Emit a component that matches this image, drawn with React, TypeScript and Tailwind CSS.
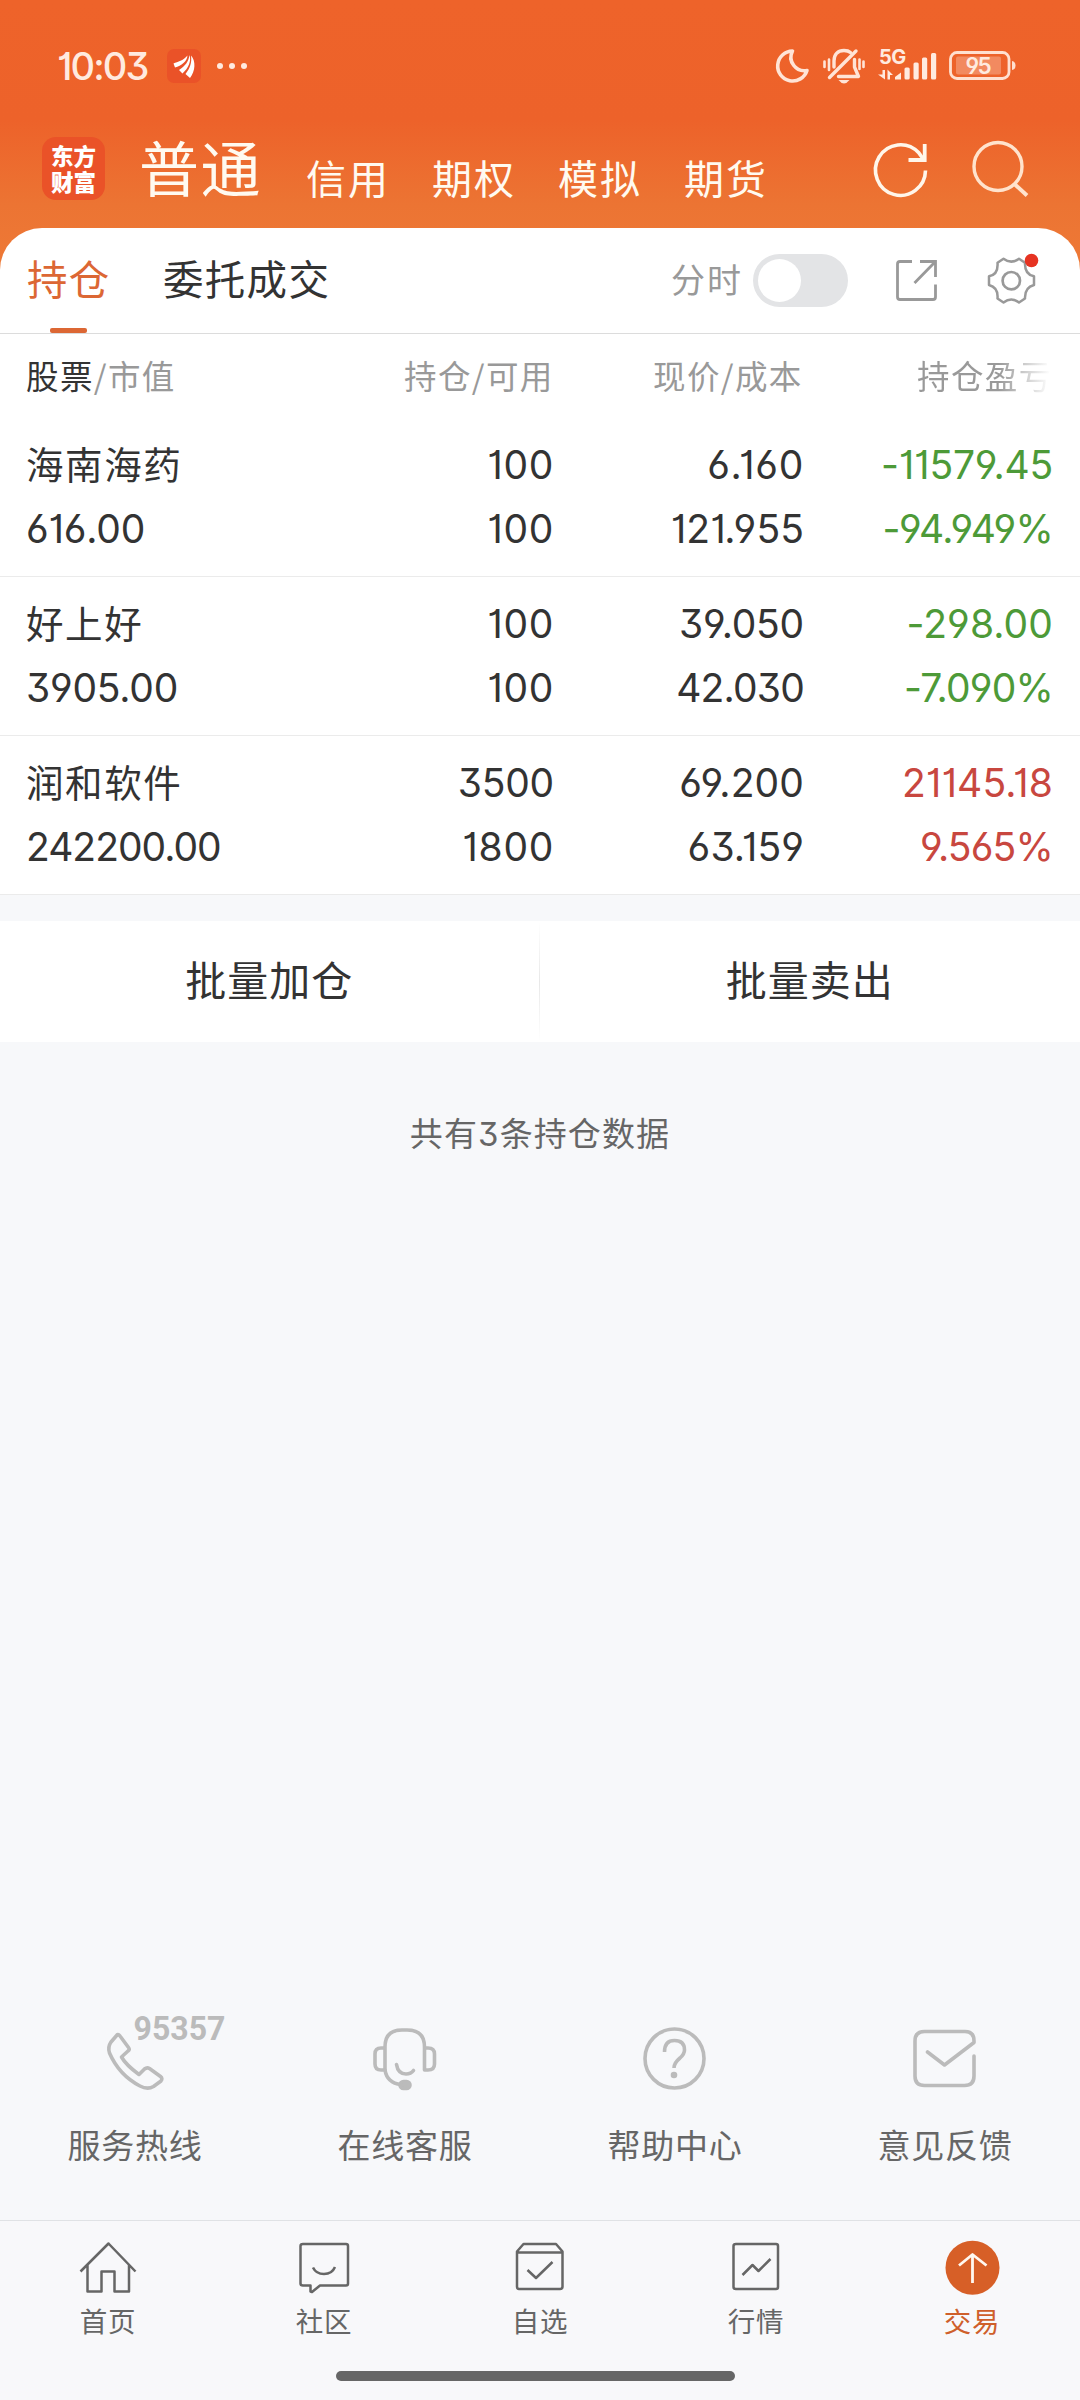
import React from "react";

type Fit = "tight" | "snug" | "normal" | "even" | "wide";
type Cell = [string, Fit];

type Holding = {
  name: string;
  up: boolean;
  value: Cell;
  total: Cell;
  available: Cell;
  price: Cell;
  cost: Cell;
  profit: Cell;
  rate: Cell;
};

const holdings: Holding[] = [
  {
    name: "海南海药",
    up: false,
    value: ["616.00", "normal"],
    total: ["100", "wide"],
    available: ["100", "wide"],
    price: ["6.160", "wide"],
    cost: ["121.955", "even"],
    profit: ["-11579.45", "normal"],
    rate: ["-94.949%", "snug"],
  },
  {
    name: "好上好",
    up: false,
    value: ["3905.00", "normal"],
    total: ["100", "wide"],
    available: ["100", "wide"],
    price: ["39.050", "normal"],
    cost: ["42.030", "snug"],
    profit: ["-298.00", "even"],
    rate: ["-7.090%", "snug"],
  },
  {
    name: "润和软件",
    up: true,
    value: ["242200.00", "tight"],
    total: ["3500", "normal"],
    available: ["1800", "wide"],
    price: ["69.200", "even"],
    cost: ["63.159", "even"],
    profit: ["21145.18", "even"],
    rate: ["9.565%", "snug"],
  },
];

const fits: Record<Fit, string> = {
  tight: "tracking-[-1px]",
  snug: "tracking-[-0.800px]",
  normal: "tracking-[-0.200px]",
  even: "tracking-[0.100px]",
  wide: "tracking-[0.700px]",
};

function Num({ cell }: { cell: Cell }) {
  return (
    <span className={"whitespace-nowrap font-['Inter',sans-serif] text-[39px] font-[370] [font-feature-settings:'cv01','cv03','cv04','cv09'] " + fits[cell[1]]}>
      {cell[0]}
    </span>
  );
}

function StatusBar() {
  return (
    <div className="flex h-[132px] items-center pl-[57px] pr-[64px] text-[#ffeadf]">
      <span className="w-[110px] font-['Inter',sans-serif] text-[38px] font-medium leading-none tracking-[-1.9px] [font-feature-settings:'cv01','cv09']">10:03</span>
      <svg className="h-[34px] w-[34px]" viewBox="0 0 34 34">
        <rect width="34" height="34" rx="7" fill="#ea5228" />
        <path d="M6.500 14.500C11 12.500 16 12 20.500 6.500C20 12.500 14.500 16.500 8 18.500Z" fill="#fff" />
        <path d="M12 21C18 17 21.500 13 22.500 6C24.500 12 21.500 19 15.500 24.500Z" fill="#fff" />
        <path d="M18.500 25C23 19 25 14 24 6.500C29 12 28.500 22 23 29Z" fill="#fff" />
      </svg>
      <div className="ml-[16px] flex gap-[6px]">
        <i className="h-[6px] w-[6px] rounded-full bg-current" />
        <i className="h-[6px] w-[6px] rounded-full bg-current" />
        <i className="h-[6px] w-[6px] rounded-full bg-current" />
      </div>
      <svg className="ml-auto h-[40px] w-[242px]" viewBox="774 46 242 40" fill="none">
        <path d="M792.500 51A15 15 0 1 0 807 70.500A13.500 13.500 0 0 1 792.500 51Z" stroke="#ffe4d6" strokeWidth="3.600" strokeLinejoin="round" />
        <g stroke="#ffe4d6" strokeWidth="3.400" strokeLinecap="round">
          <path d="M829.500 77.500L856 51" />
          <path d="M834 67V61C834 54 838 50.500 844 50.500C847 50.500 849 51.200 850.500 52.500" />
          <path d="M854.500 59.500V67L858.500 76.500H838.500" strokeLinejoin="round" />
          <path d="M824.500 61.500V67M829 59.500V70M859.500 59.500V69M863.500 61.500V67" strokeWidth="2.600" />
        </g>
        <path d="M838.500 80H849.500Q844 87 838.500 80Z" fill="#ffe4d6" />
        <text x="879" y="64" fill="#ffeadf" className="font-['Inter',sans-serif] text-[20px] font-bold tracking-[-0.500px]">5G</text>
        <g fill="#ffeadf">
          <path d="M882.500 70H885V79.500L878 74.500H882.500ZM887.500 79.500H890V75H893L887.500 69.500Z" />
          <path d="M895 79.500V77L901 72.500V79.500Z" />
          <rect x="904.500" y="67.500" width="5.200" height="12" rx="1.500" />
          <rect x="913.500" y="62.500" width="5.200" height="17" rx="1.500" />
          <rect x="922" y="57.500" width="5.200" height="22" rx="1.500" />
          <rect x="931" y="53" width="5.200" height="26.500" rx="1.500" />
        </g>
        <rect x="950.500" y="52.500" width="58.500" height="26" rx="6.500" stroke="#ffe0d0" strokeWidth="2.800" />
        <rect x="956" y="56.500" width="45" height="18" rx="2" fill="#f28a60" />
        <path d="M1012 61Q1015.500 61.500 1015.500 65.500T1012 70Z" fill="#ffe0d0" />
        <text x="965.500" y="73.500" fill="#ffeadf" className="font-['Inter',sans-serif] text-[22.500px] font-semibold tracking-[-1.700px] [font-feature-settings:'cv04']">95</text>
      </svg>
    </div>
  );
}

function TitleBar() {
  return (
    <div className="flex h-[96px] pl-[42px] font-['Noto_Sans_CJK_SC',sans-serif] text-[#fffaf0]">
      <div className="mt-[5px] grid h-[63px] w-[63px] shrink-0 place-content-center rounded-[14px] bg-[#ea5228] pb-[2px] text-[22.500px] font-black leading-[26px] text-white">
        <span>东方</span>
        <span>财富</span>
      </div>
      <span className="ml-[34px] mt-[-4px] w-[167px] shrink-0 text-[60px] leading-[76px] tracking-[1.500px]">普通</span>
      <div className="mt-[15px] flex shrink-0 gap-[42px] text-[40px] leading-[60px] tracking-[2px]">
        <span>信用</span>
        <span>期权</span>
        <span>模拟</span>
        <span>期货</span>
      </div>
      <svg className="ml-[102px] mt-[8px] h-[60px] w-[160px] shrink-0" viewBox="870 140 160 60" fill="none">
        <path d="M925.500 170.500A25 25.300 0 1 1 918.500 152.500L924 160" stroke="#fff6ea" strokeWidth="3.600" />
        <path d="M924.700 144V160H908.500" stroke="#fff6ea" strokeWidth="3.800" />
        <circle cx="998" cy="166.500" r="24" stroke="#ffe3cd" strokeWidth="3.400" />
        <path d="M1014.500 184L1027 195.500" stroke="#ffe3cd" strokeWidth="4" />
      </svg>
    </div>
  );
}

function TabRow() {
  return (
    <div className="flex h-[106px] border-b border-[#dcdcdc] pl-[27px] font-['Noto_Sans_CJK_SC',sans-serif] text-[40.500px] tracking-[1.300px]">
      <div className="relative flex h-[105px] w-[136px] text-[#dc6734]">
        <span className="leading-[99px]">持仓</span>
        <i className="absolute bottom-0 left-[23px] h-[5px] w-[37px] rounded-[2px] bg-[#dc6734]" />
      </div>
      <span className="w-[508px] leading-[99px] text-[#333]">委托成交</span>
      <span className="w-[82px] text-[34px] leading-[102px] tracking-[2px] text-[#999]">分时</span>
      <div className="mt-[26px] flex h-[53px] w-[95px] items-center rounded-full bg-[#e3e4e6] pl-[5px]">
        <i className="h-[43px] w-[43px] rounded-full bg-white" />
      </div>
      <svg className="ml-[42px] mt-[22px] h-[60px] w-[160px]" viewBox="890 250 160 60" fill="none" stroke="#999" strokeWidth="2.800">
        <path d="M912 261.500H900Q897.500 261.500 897.500 264V297Q897.500 299.500 900 299.500H933Q935.500 299.500 935.500 297V284.500" />
        <path d="M920 261.500H935.500V277M934.500 262.500L914.500 283" />
        <path
          d="M997.500 262.700L1003.500 258.700Q1011.300 264.500 1019 258.700L1025 262.700Q1024.500 274.500 1034 276.300V285Q1024.500 287.500 1025 298.500L1019 302.500Q1011.300 296.500 1003.500 302.500L997.500 298.500Q998.500 287.500 989 285V276.300Q998.500 274.500 997.500 262.700Z"
          strokeWidth="2.500"
          strokeLinejoin="round"
        />
        <circle cx="1011.300" cy="280.700" r="8.700" strokeWidth="2.700" />
        <circle cx="1031.500" cy="260.500" r="6.800" fill="#e63322" stroke="none" />
      </svg>
    </div>
  );
}

function HoldingsTable() {
  return (
    <>
      <div className="flex h-[84px] pl-[26px] font-['Noto_Sans_CJK_SC',sans-serif] text-[32.500px] leading-[81px] tracking-[1.400px] text-[#999]">
        <div className="w-[378px]">
          <span className="text-[#333]">股票</span>/市值
        </div>
        <div className="w-[249px]">持仓/可用</div>
        <div className="w-[264px]">现价/成本</div>
        <div className="w-[136px] bg-[linear-gradient(90deg,#999_60%,#fff_98%)] bg-clip-text text-transparent">持仓盈亏</div>
      </div>
      {holdings.map((h) => (
        <div key={h.name} className="flex h-[159px] border-b border-[#ebebeb] pl-[26px] pt-[15px] leading-[64px] text-[#333]">
          <div className="flex w-[300px] flex-col">
            <span className="h-[64px] font-['Noto_Sans_CJK_SC',sans-serif] text-[37.500px] leading-[59px] tracking-[1.600px]">{h.name}</span>
            <Num cell={h.value} />
          </div>
          <div className="flex w-[228px] flex-col items-end">
            <Num cell={h.total} />
            <Num cell={h.available} />
          </div>
          <div className="flex w-[250px] flex-col items-end">
            <Num cell={h.price} />
            <Num cell={h.cost} />
          </div>
          <div className={h.up ? "flex w-[249px] flex-col items-end text-[#c8473f]" : "flex w-[249px] flex-col items-end text-[#4d9a38]"}>
            <Num cell={h.profit} />
            <Num cell={h.rate} />
          </div>
        </div>
      ))}
    </>
  );
}

const services = [
  {
    label: "服务热线",
    icon: (
      <>
        <path d="M117.500 2034.500Q119 2034.500 120 2036L128.500 2047.500Q130 2049.500 128 2051L121.500 2057Q126 2065 139 2074.500L144.500 2069Q147 2067 149.500 2068.500L160.500 2076.500Q163 2078.500 161 2081L153.500 2086.500Q147.500 2090 140 2086Q119 2075 109.500 2053Q107.500 2047 111 2042Z" />
        <text x="133.500" y="2040" fill="#bbb" stroke="none" textLength="92" lengthAdjust="spacingAndGlyphs" className="font-['Roboto',sans-serif] text-[33.500px] font-bold">95357</text>
      </>
    ),
  },
  {
    label: "在线客服",
    icon: (
      <>
        <path d="M385 2071V2047Q385 2030 402 2030H407Q424.500 2030 424.500 2047V2070H428Q434.500 2070 434.500 2064V2054Q434.500 2048 428 2048H424.500" />
        <path d="M385 2048H381Q375 2048 375 2054V2064Q375 2070 381 2070H385Q387 2083 401 2084.500" />
        <path d="M396.500 2064.500Q398 2074 406 2074Q411 2074 413.500 2070.500" strokeLinecap="round" />
        <rect x="400" y="2081.500" width="10" height="7" rx="3.500" fill="#bbb" />
      </>
    ),
  },
  {
    label: "帮助中心",
    icon: (
      <>
        <circle cx="674.500" cy="2058.500" r="29.500" />
        <path d="M664.500 2052Q664.500 2040.500 674.500 2040.500Q684.500 2040.500 684.500 2050Q684.500 2054 680 2058Q674 2063 674 2068" />
        <circle cx="674" cy="2075" r="3.300" fill="#bbb" stroke="none" />
      </>
    ),
  },
  {
    label: "意见反馈",
    icon: (
      <path d="M974 2056V2076Q974 2085.500 964.500 2085.500H924.500Q915 2085.500 915 2076V2041Q915 2031.500 924.500 2031.500H965Q974 2031.500 974 2041V2042.500L944.500 2065L927.500 2052" strokeLinecap="round" strokeLinejoin="round" />
    ),
  },
];

const serviceBoxes = ["35 2010 200 90", "305 2010 200 90", "575 2010 200 90", "845 2010 200 90"];

function Services() {
  return (
    <div className="grid grid-cols-4">
      {services.map((s, i) => (
        <div key={s.label} className="flex flex-col items-center">
          <svg className="h-[90px] w-[200px]" viewBox={serviceBoxes[i]} fill="none" stroke="#bbb" strokeWidth="3.600" strokeLinejoin="round">
            {s.icon}
          </svg>
          <span className="mt-[20px] font-['Noto_Sans_CJK_SC',sans-serif] text-[33px] leading-[48px] tracking-[0.800px] text-[#666]">{s.label}</span>
        </div>
      ))}
    </div>
  );
}

const navItems = [
  {
    label: "首页",
    icon: <path d="M80.500 2271.500L108.500 2243.500L135.500 2271.500M87.500 2265V2291.500H101.500V2271.500H114.500V2291.500H129V2265" />,
  },
  {
    label: "社区",
    icon: <path d="M303 2244H346Q348 2244 348 2246V2283.500Q348 2285.500 346 2285.500H320L312 2292L310.500 2291.500V2285.500H303Q300.500 2285.500 300.500 2283.500V2246Q300.500 2244 303 2244ZM313 2267.500Q316 2274 324 2274T335 2267" />,
  },
  {
    label: "自选",
    icon: <path d="M523.500 2244H556L562.500 2251.500V2286.500Q562.500 2289 560 2289H519Q517 2289 517 2286.500V2251.500ZM517 2252.500H562.500M527.500 2270L536 2278L552.500 2262" />,
  },
  {
    label: "行情",
    icon: <path d="M736 2244H776Q778 2244 778 2246V2287Q778 2289 776 2289H736Q733.500 2289 733.500 2287V2246Q733.500 2244 736 2244ZM742.500 2275L752.500 2265L758.500 2271L770.500 2259" />,
  },
  {
    label: "交易",
    icon: (
      <>
        <circle cx="972.500" cy="2267.700" r="27" fill="#d75f27" stroke="none" />
        <path d="M972.500 2283V2254.500M959 2265.500L972.500 2254.500L986.500 2265.500" stroke="#fff8f0" strokeWidth="2.800" />
      </>
    ),
  },
];

const navBoxes = ["78 2236 60 60", "294 2236 60 60", "510 2236 60 60", "726 2236 60 60", "942 2236 60 60"];

function BottomNav() {
  return (
    <div className="h-[180px] border-t border-[#e0e2e5] bg-[#f8f8fa]">
      <div className="grid grid-cols-5 pt-[15px]">
        {navItems.map((n, i) => (
          <div key={n.label} className={i === 4 ? "flex flex-col items-center text-[#cf5f2b]" : "flex flex-col items-center text-[#666]"}>
            <svg className="h-[60px] w-[60px]" viewBox={navBoxes[i]} fill="none" stroke="#666" strokeWidth="2.500" strokeLinejoin="round">
              {n.icon}
            </svg>
            <span className="mt-[4px] font-['Noto_Sans_CJK_SC',sans-serif] text-[27.500px] leading-[40px] tracking-[0.800px]">{n.label}</span>
          </div>
        ))}
      </div>
      <div className="ml-[336px] mt-[31px] h-[10px] w-[399px] rounded-full bg-[#666]" />
    </div>
  );
}

export default function App() {
  return (
    <div className="flex h-[2400px] w-[1080px] flex-col overflow-hidden bg-[#f7f8fa]">
      <div className="bg-[linear-gradient(180deg,#ee632a_0px,#ed622a_120px,#ec7433_205px,#ee7936_270px)]">
        <StatusBar />
        <TitleBar />
        <div className="rounded-t-[42px] bg-white">
          <TabRow />
          <HoldingsTable />
        </div>
      </div>
      <div className="mt-[26px] flex h-[121px] bg-white text-center font-['Noto_Sans_CJK_SC',sans-serif] text-[41px] leading-[114px] tracking-[1px] text-[#333]">
        <span className="w-[539px]">批量加仓</span>
        <i className="w-px bg-[linear-gradient(180deg,#fff,#e8e8e8,#fff)]" />
        <span className="w-[541px]">批量卖出</span>
      </div>
      <div className="mt-[68px] text-center font-['Noto_Sans_CJK_SC',sans-serif] text-[33px] leading-[44px] tracking-[1.100px] text-[#666]">
        共有<span className="font-['Inter',sans-serif] text-[33px] font-[370] [font-feature-settings:'cv09']">3</span>条持仓数据
      </div>
      <div className="mt-auto pb-[52px]">
        <Services />
      </div>
      <BottomNav />
    </div>
  );
}
